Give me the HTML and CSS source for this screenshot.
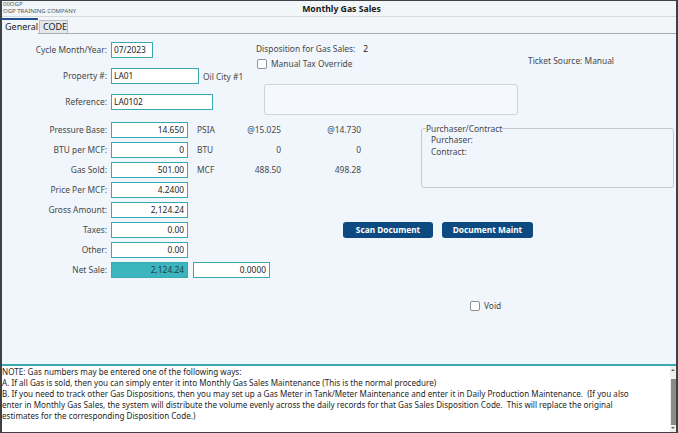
FILE: index.html
```html
<!DOCTYPE html>
<html lang="en">
<head>
<meta charset="utf-8">
<title>Monthly Gas Sales</title>
<link rel="stylesheet" href="styles.css">
</head>
<body>
<div class="window">
  <header class="titlebar">
    <div class="company">
      <div class="co-code">00OGP</div>
      <div class="co-name">OGP TRAINING COMPANY</div>
    </div>
    <div class="title">Monthly Gas Sales</div>
    <div class="spacer"></div>
  </header>

  <nav class="tabs">
    <div class="tab active">General</div>
    <div class="tab">CODE</div>
  </nav>

  <main class="content">
    <section class="top">
      <div class="ident">
        <div class="lbl">Cycle Month/Year:</div>
        <div class="field"><div class="inp w-cycle">07/2023</div></div>
        <div class="lbl">Property #:</div>
        <div class="field"><div class="inp w-prop">LA01</div><span class="aside">Oil City #1</span></div>
        <div class="lbl">Reference:</div>
        <div class="field"><div class="inp w-ref">LA0102</div></div>
      </div>
      <div class="disp">
        <div class="disp-line"><span>Disposition for Gas Sales:</span><span class="disp-val">2</span></div>
        <div class="check-line"><span class="cbox"></span><span>Manual Tax Override</span></div>
        <div class="memo"></div>
      </div>
      <div class="ticket">Ticket Source: Manual</div>
    </section>

    <section class="figures">
      <div class="lbl r1">Pressure Base:</div>
      <div class="inp num c-inp r1">14.650</div>
      <div class="unit r1">PSIA</div>
      <div class="v1 r1">@15.025</div>
      <div class="v2 r1">@14.730</div>

      <div class="lbl r2">BTU per MCF:</div>
      <div class="inp num c-inp r2">0</div>
      <div class="unit r2">BTU</div>
      <div class="v1 r2">0</div>
      <div class="v2 r2">0</div>

      <div class="lbl r3">Gas Sold:</div>
      <div class="inp num c-inp r3">501.00</div>
      <div class="unit r3">MCF</div>
      <div class="v1 r3">488.50</div>
      <div class="v2 r3">498.28</div>

      <div class="lbl r4">Price Per MCF:</div>
      <div class="inp num c-inp r4">4.2400</div>

      <div class="lbl r5">Gross Amount:</div>
      <div class="inp num c-inp r5">2,124.24</div>

      <div class="lbl r6">Taxes:</div>
      <div class="inp num c-inp r6">0.00</div>
      <div class="btns r6">
        <button class="btn btn-scan" type="button">Scan Document</button>
        <button class="btn btn-maint" type="button">Document Maint</button>
      </div>

      <div class="lbl r7">Other:</div>
      <div class="inp num c-inp r7">0.00</div>

      <div class="lbl r8">Net Sale:</div>
      <div class="inp num c-inp filled r8">2,124.24</div>
      <div class="inp num c-inp2 r8">0.0000</div>

      <fieldset class="group">
        <legend>Purchaser/Contract</legend>
        <div class="grp-line">Purchaser:</div>
        <div class="grp-line">Contract:</div>
      </fieldset>
    </section>

    <div class="void-line"><span class="cbox"></span><span>Void</span></div>

    <section class="note">
      <div class="note-text">NOTE: Gas numbers may be entered one of the following ways:
A. If all Gas is sold, then you can simply enter it into Monthly Gas Sales Maintenance (This is the normal procedure)
B. If you need to track other Gas Dispositions, then you may set up a Gas Meter in Tank/Meter Maintenance and enter it in Daily Production Maintenance.  (If you also
enter in Monthly Gas Sales, the system will distribute the volume evenly across the daily records for that Gas Sales Disposition Code.  This will replace the original
estimates for the corresponding Disposition Code.)</div>
      <div class="scrollbar">
        <span class="arrow up"></span>
        <span class="thumb"></span>
        <span class="arrow down"></span>
      </div>
    </section>
  </main>
</div>
</body>
</html>
```

FILE: styles.css
```css
* { box-sizing: border-box; }

html, body {
  margin: 0;
  padding: 0;
}

body {
  width: 678px;
  height: 433px;
  overflow: hidden;
  font-family: "Noto Sans", "Open Sans", sans-serif;
  font-size: 8.4px;
  color: #474747;
  background: #f0f6fc;
}

.window {
  width: 678px;
  height: 433px;
  display: flex;
  flex-direction: column;
  border: 1px solid #3d4247;
  border-left-width: 2px;
  border-right-width: 2px;
  background: #f0f6fc;
}

/* title bar */
.titlebar {
  height: 16px;
  flex: none;
  display: grid;
  grid-template-columns: 1fr auto 1fr;
  align-items: center;
  background: #f3f6f9;
  border-bottom: 1px solid #d6dade;
}

.company {
  font-size: 6px;
  line-height: 7px;
  color: #555;
  padding-left: 1px;
  align-self: start;
}

.title {
  font-weight: bold;
  font-size: 8.7px;
  color: #1a1a1a;
  padding-left: 5px;
}

/* tabs */
.tabs {
  height: 17px;
  flex: none;
  display: flex;
  align-items: flex-end;
  background: #f3f6f9;
  border-bottom: 1px solid #a9adb2;
}

.tab {
  font-size: 9px;
  color: #222;
  padding: 0 3px;
}

.tab.active {
  height: 16px;
  margin-bottom: -1px;
  width: 36px;
  border-top: 2px solid #1d4f91;
  background: #f0f6fc;
  line-height: 13px;
}

.tab:not(.active) {
  height: 13px;
  margin-left: 1px;
  width: 29px;
  line-height: 12px;
  background: #e4e7eb;
  border: 1px solid #b9bdc2;
  border-bottom: none;
  text-align: center;
}

/* content */
.content {
  flex: 1;
  display: flex;
  flex-direction: column;
  min-height: 0;
}

.top {
  height: 81px;
  flex: none;
  display: flex;
  padding-top: 8px;
}

.ident {
  width: 254px;
  display: grid;
  grid-template-columns: 106px 3px auto;
  grid-auto-rows: 16px;
  row-gap: 10px;
  align-content: start;
}

.lbl {
  grid-column: 1;
  text-align: right;
  line-height: 16px;
  padding-right: 1px;
  white-space: nowrap;
}

.field {
  grid-column: 3;
  display: flex;
  align-items: center;
  gap: 4px;
}

.inp {
  height: 16px;
  line-height: 14px;
  background: #fff;
  border: 1px solid #36a9b1;
  color: #1d1d1d;
  padding: 0 2px;
  white-space: nowrap;
}

.w-cycle { width: 42px; }
.w-prop { width: 88px; }
.w-ref { width: 102px; }

.aside { white-space: nowrap; }

.disp {
  width: 272px;
}

.disp-line {
  margin-top: 1px;
  height: 12px;
  line-height: 12px;
  display: flex;
}

.disp-val {
  margin-left: 8px;
  color: #222;
}

.check-line {
  margin-top: 3px;
  height: 12px;
  line-height: 12px;
  display: flex;
  align-items: center;
  gap: 4px;
  padding-left: 1px;
}

.cbox {
  width: 10px;
  height: 10px;
  background: #fff;
  border: 1px solid #8d9196;
  border-radius: 2px;
  flex: none;
}

.memo {
  margin: 14px 0 0 8px;
  width: 254px;
  height: 31px;
  border: 1px solid #cfd4d9;
  border-radius: 3px;
  background: #f5f9fd;
}

.ticket {
  margin-top: 13px;
  line-height: 12px;
  height: 12px;
  white-space: nowrap;
}

/* figures grid */
.figures {
  flex: none;
  margin-top: 7px;
  display: grid;
  grid-template-columns: 106px 3px 77px 5px 47px 41px 80px 60px 253px;
  grid-template-rows: repeat(8, 16px);
  row-gap: 4px;
}

.r1 { grid-row: 1; }
.r2 { grid-row: 2; }
.r3 { grid-row: 3; }
.r4 { grid-row: 4; }
.r5 { grid-row: 5; }
.r6 { grid-row: 6; }
.r7 { grid-row: 7; }
.r8 { grid-row: 8; }

.c-inp { grid-column: 3; }
.c-inp2 { grid-column: 5 / span 2; width: 77px; }

.num {
  text-align: right;
  padding-right: 3px;
}

.filled {
  background: #3cb5bf;
  color: #1f4045;
}

.unit {
  grid-column: 5;
  padding-left: 4px;
  line-height: 16px;
}

.v1, .v2 {
  text-align: right;
  line-height: 16px;
}

.v1 { grid-column: 6; }
.v2 { grid-column: 7; }

.btns {
  grid-column: 5 / span 5;
  display: flex;
  gap: 9px;
  padding-left: 150px;
}

.btn {
  height: 16px;
  border: none;
  border-radius: 3px;
  background: #0e4a82;
  color: #fff;
  font-family: inherit;
  font-weight: bold;
  font-size: 8.3px;
  padding: 0;
  line-height: 16px;
}

.btn-scan { width: 90px; }
.btn-maint { width: 91px; }

.group {
  grid-column: 9;
  grid-row: 1 / span 4;
  align-self: start;
  margin: 1px 0 0 0;
  height: 65px;
  padding: 0 4px;
  border: 1px solid #c5cad0;
  border-radius: 3px;
  min-width: 0;
}

.group legend {
  padding: 0;
  line-height: 11px;
  font-size: inherit;
}

.grp-line {
  padding-left: 5px;
  line-height: 12px;
}

/* void */
.void-line {
  flex: none;
  margin-top: 22px;
  height: 11px;
  padding-left: 468px;
  display: flex;
  align-items: center;
  gap: 4px;
}

/* note */
.note {
  margin-top: auto;
  flex: none;
  height: 68px;
  border-top: 2px solid #3aa9b1;
  background: #fff;
  display: flex;
}

.note-text {
  flex: 1;
  min-width: 0;
  white-space: pre;
  overflow: hidden;
  color: #1f1f1f;
  font-size: 8.1px;
  line-height: 11px;
  padding-left: 0;
}

.scrollbar {
  width: 6px;
  flex: none;
  background: #efefef;
  display: flex;
  flex-direction: column;
  align-items: center;
}

.arrow {
  width: 0;
  height: 0;
  border-left: 2px solid transparent;
  border-right: 2px solid transparent;
  flex: none;
}

.arrow.up {
  margin-top: 3px;
  border-bottom: 2px solid #606060;
}

.arrow.down {
  margin-top: auto;
  margin-bottom: 3px;
  border-top: 2px solid #606060;
}

.thumb {
  width: 5px;
  height: 46px;
  margin-top: 8px;
  background: #8a8a8a;
}
```
